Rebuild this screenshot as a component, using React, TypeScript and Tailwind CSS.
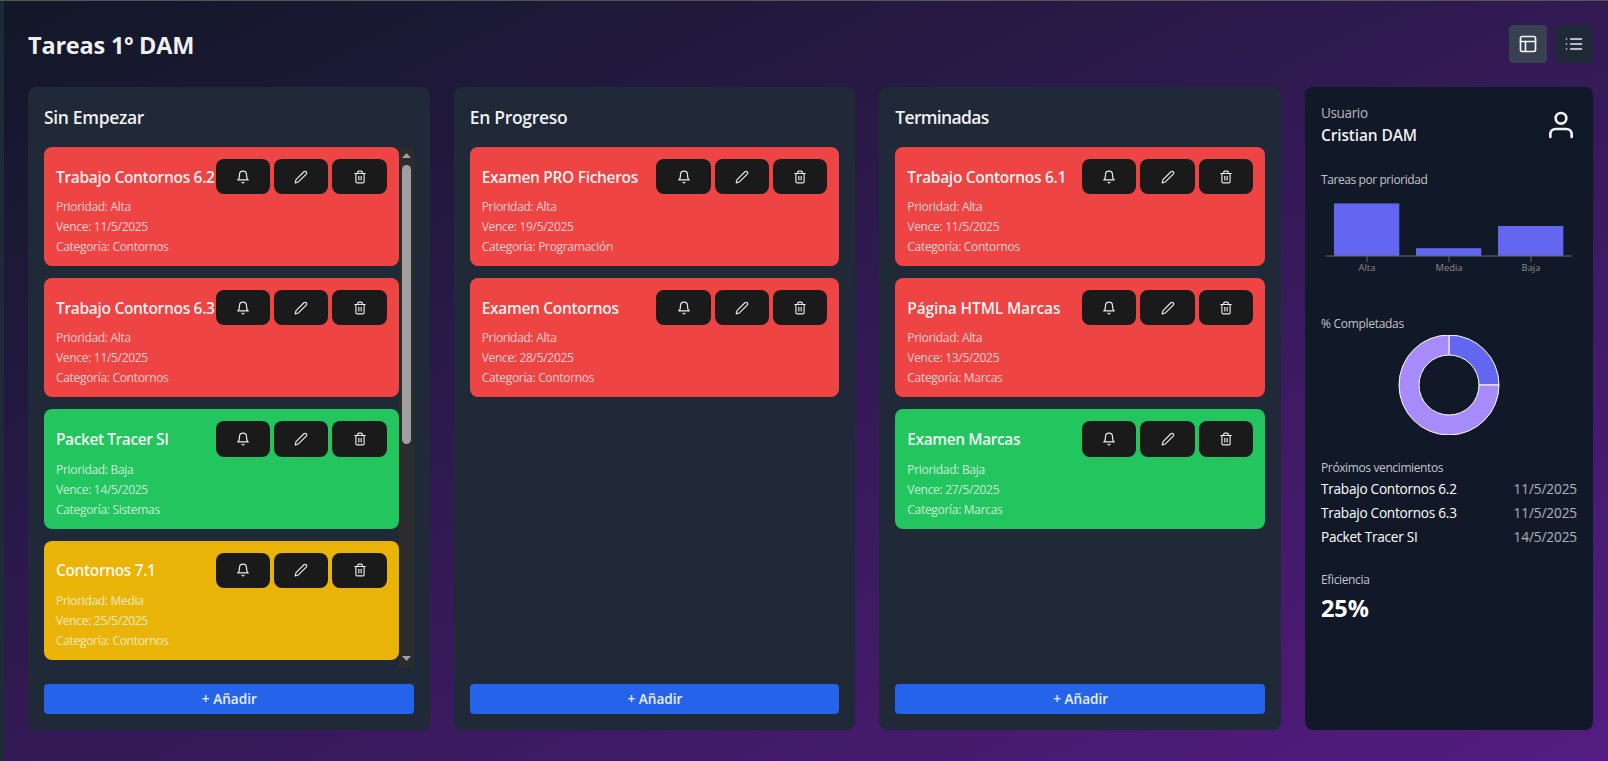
import type { ReactNode } from "react";
import { FiBell, FiEdit2, FiLayout, FiList, FiTrash2, FiUser } from "react-icons/fi";

type Priority = "Alta" | "Media" | "Baja";

interface Task {
  title: string;
  priority: Priority;
  due: string;
  category: string;
  tracking?: string;
}

interface ColumnData {
  name: string;
  tracking: string;
  tasks: Task[];
  scrolls?: boolean;
}

const priorityColor: Record<Priority, string> = {
  Alta: "bg-[#ef4444]",
  Media: "bg-[#eab308]",
  Baja: "bg-[#22c55e]",
};

const columns: ColumnData[] = [
  {
    name: "Sin Empezar",
    tracking: "tracking-[-0.33px]",
    scrolls: true,
    tasks: [
      { title: "Trabajo Contornos 6.2", priority: "Alta", due: "11/5/2025", category: "Contornos" },
      { title: "Trabajo Contornos 6.3", priority: "Alta", due: "11/5/2025", category: "Contornos" },
      { title: "Packet Tracer SI", priority: "Baja", due: "14/5/2025", category: "Sistemas", tracking: "tracking-[-0.42px]" },
      { title: "Contornos 7.1", priority: "Media", due: "25/5/2025", category: "Contornos", tracking: "tracking-[-0.36px]" },
    ],
  },
  {
    name: "En Progreso",
    tracking: "tracking-[-0.3px]",
    tasks: [
      { title: "Examen PRO Ficheros", priority: "Alta", due: "19/5/2025", category: "Programación" },
      { title: "Examen Contornos", priority: "Alta", due: "28/5/2025", category: "Contornos" },
    ],
  },
  {
    name: "Terminadas",
    tracking: "tracking-[-0.68px]",
    tasks: [
      { title: "Trabajo Contornos 6.1", priority: "Alta", due: "11/5/2025", category: "Contornos" },
      { title: "Página HTML Marcas", priority: "Alta", due: "13/5/2025", category: "Marcas", tracking: "tracking-[-0.15px]" },
      { title: "Examen Marcas", priority: "Baja", due: "27/5/2025", category: "Marcas", tracking: "tracking-[-0.4px]" },
    ],
  },
];

const upcoming = [
  ["Trabajo Contornos 6.2", "11/5/2025"],
  ["Trabajo Contornos 6.3", "11/5/2025"],
  ["Packet Tracer SI", "14/5/2025"],
];

function CardButton({ label, children }: { label: string; children: ReactNode }) {
  return (
    <button
      aria-label={label}
      className="flex h-[35.2px] w-[54.4px] items-center justify-center rounded-lg bg-[#1a1a1a] pl-[0.5px] text-white/90"
    >
      {children}
    </button>
  );
}

function TaskCard({ task }: { task: Task }) {
  return (
    <article className={`h-[119.2px] shrink-0 rounded-lg p-3 ${priorityColor[task.priority]}`}>
      <div className="flex items-center justify-between">
        <h3
          className={`w-0 pt-[1.4px] text-[15.5px] font-semibold whitespace-nowrap text-white/95 ${task.tracking ?? "tracking-[-0.31px]"}`}
        >
          {task.title}
        </h3>
        <div className="flex shrink-0 gap-1">
          <CardButton label="Recordatorio"><FiBell size={14} /></CardButton>
          <CardButton label="Editar"><FiEdit2 size={14} /></CardButton>
          <CardButton label="Eliminar"><FiTrash2 size={14} /></CardButton>
        </div>
      </div>
      <div className="pt-[3px] text-xs leading-5 tracking-[-0.31px] text-white/75">
        <p>Prioridad: {task.priority}</p>
        <p>Vence: {task.due}</p>
        <p>Categoría: {task.category}</p>
      </div>
    </article>
  );
}

function ScrollTrack() {
  return (
    <div className="flex w-[15px] shrink-0 flex-col items-center bg-[#2c2c2c]">
      <svg className="mt-1.5 h-[5px] w-[9px] shrink-0" viewBox="0 0 9 5">
        <path d="M4.5 0 9 5H0Z" fill="#9f9f9f" />
      </svg>
      <div className="mt-[7px] h-[279px] w-[9px] shrink-0 rounded-full bg-[#9f9f9f]" />
      <svg className="mt-auto mb-[7px] h-[5px] w-[9px] shrink-0" viewBox="0 0 9 5">
        <path d="M4.5 5 9 0H0Z" fill="#9f9f9f" />
      </svg>
    </div>
  );
}

function Column({ column }: { column: ColumnData }) {
  return (
    <section className="flex min-w-0 flex-1 flex-col rounded-lg bg-[#1f2937] p-4">
      <h2 className={`mb-4 text-[17.5px] leading-7 font-semibold text-white/95 ${column.tracking}`}>{column.name}</h2>
      <div className="flex min-h-0 flex-1 overflow-hidden">
        <div className="flex min-w-0 flex-1 flex-col gap-3">
          {column.tasks.map((task) => (
            <TaskCard key={task.title} task={task} />
          ))}
        </div>
        {column.scrolls && <ScrollTrack />}
      </div>
      <button className="mt-4 h-[30px] shrink-0 rounded bg-[#2563eb] pt-px pl-px text-[13.6px] font-semibold text-white/90">
        + Añadir
      </button>
    </section>
  );
}

function PriorityChart() {
  return (
    <svg className="mt-[3px] block h-[120px] w-64" viewBox="0 0 256 120">
      <g fill="#6366f1">
        <rect x="13" y="12.4" width="65.3" height="52.6" />
        <rect x="95" y="57.2" width="65.3" height="7.8" />
        <rect x="177" y="35" width="65.3" height="30" />
      </g>
      <g stroke="#666" strokeWidth="1">
        <path d="M5 65H251M46 65v6M128 65v6M210 65v6" fill="none" />
      </g>
      <g fill="#8c8c8c" fontSize="9.4" textAnchor="middle">
        <text x="46" y="80">Alta</text>
        <text x="128" y="80">Media</text>
        <text x="210" y="80">Baja</text>
      </g>
    </svg>
  );
}

function CompletionChart() {
  return (
    <svg className="mt-[3px] block h-[100px] w-64" viewBox="0 0 256 100">
      <g stroke="#fff" strokeWidth="1">
        <path d="M128 0A50 50 0 0 1 178 50H158A30 30 0 0 0 128 20Z" fill="#6366f1" />
        <path d="M178 50A50 50 0 1 1 128 0V20A30 30 0 1 0 158 50Z" fill="#a78bfa" />
      </g>
    </svg>
  );
}

function Sidebar() {
  return (
    <aside className="flex w-72 shrink-0 flex-col rounded-lg bg-[#111827] p-4">
      <div className="flex items-start justify-between">
        <div>
          <p className="text-[13.6px] leading-5 tracking-[-0.4px] text-white/70">Usuario</p>
          <p className="text-[15.5px] leading-[25px] font-semibold tracking-[-0.14px] text-white/95">Cristian DAM</p>
        </div>
        <FiUser size={32} className="mt-1.5 text-white/95" />
      </div>
      <p className="mt-6 text-xs leading-4 tracking-[-0.42px] text-white/75">Tareas por prioridad</p>
      <PriorityChart />
      <p className="mt-[5px] text-xs leading-4 tracking-[-0.3px] text-white/75">% Completadas</p>
      <CompletionChart />
      <p className="mt-[25px] text-xs leading-4 tracking-[-0.38px] text-white/75">Próximos vencimientos</p>
      <ul className="mt-[3px] flex flex-col gap-1 text-[13.6px] leading-5">
        {upcoming.map(([title, date]) => (
          <li key={title} className="flex justify-between">
            <span className="tracking-[-0.25px] text-white">{title}</span>
            <span className="tracking-[-0.1px] text-white/65">{date}</span>
          </li>
        ))}
      </ul>
      <p className="mt-[25px] text-xs leading-4 tracking-[-0.36px] text-white/75">Eficiencia</p>
      <p className="mt-1 text-[23.5px] leading-8 font-bold tracking-[-0.1px] text-white">25%</p>
    </aside>
  );
}

export default function App() {
  return (
    <div className="flex h-[761px] w-full flex-col overflow-hidden border-t border-[#555] bg-[#111827] font-['Open_Sans','Noto_Sans',sans-serif]">
      <div className="flex min-h-0 flex-1">
        <div className="w-1 shrink-0 bg-[#1f2937]" />
        <main className="flex min-w-0 flex-1 flex-col bg-linear-to-br/srgb from-[#111827] to-[#581c87] to-[106%] pt-6 pr-[15px] pb-[31px] pl-6">
          <header className="mb-6 flex h-[38px] items-center justify-between">
            <h1 className="pt-0.5 text-[23.5px] leading-8 font-bold tracking-[-0.2px] text-white/95">Tareas 1º DAM</h1>
            <div className="flex gap-2">
              <button aria-label="Tablero" className="flex size-[38px] items-center justify-center rounded bg-[#374151] text-white/95">
                <FiLayout size={20} />
              </button>
              <button aria-label="Lista" className="flex size-[38px] items-center justify-center rounded bg-[#1f2937] text-white/90">
                <FiList size={20} />
              </button>
            </div>
          </header>
          <div className="flex min-h-0 flex-1 gap-6">
            {columns.map((column) => (
              <Column key={column.name} column={column} />
            ))}
            <Sidebar />
          </div>
        </main>
      </div>
    </div>
  );
}
